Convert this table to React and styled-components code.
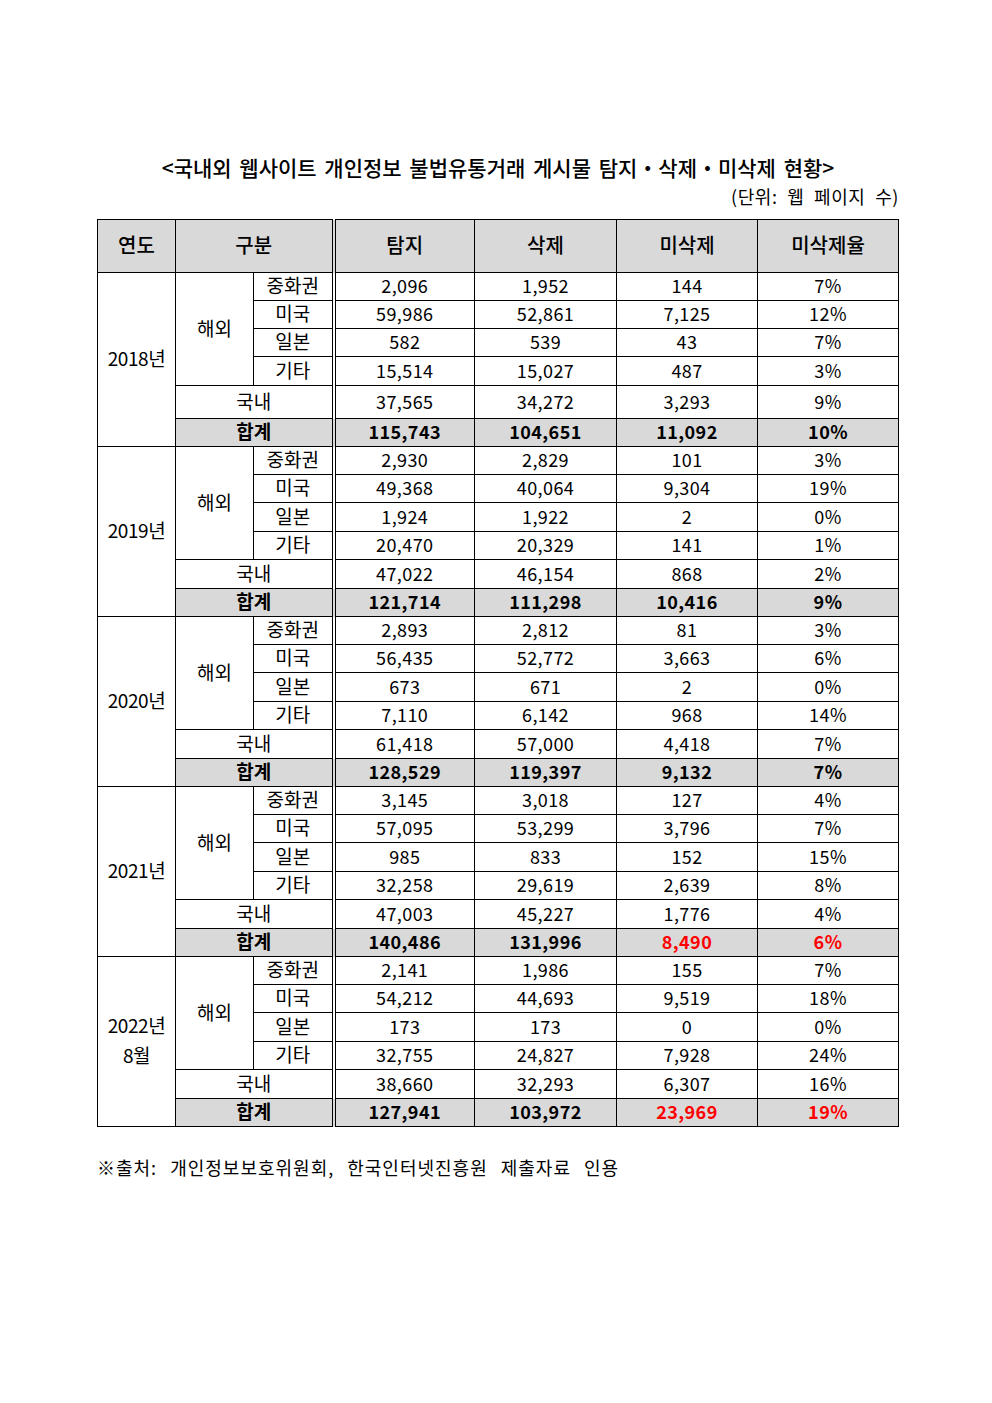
import React from 'react'
import styled, { createGlobalStyle } from 'styled-components'

const GlobalStyle = createGlobalStyle`
  body {
    margin: 0;
    background: #fff;
    color: #000;
    font-family: "Noto Sans CJK KR", "Noto Sans", sans-serif;
  }
`

const Page = styled.div`
  width: 802px;
  margin-left: 97px;
  padding-top: 152px;
  padding-bottom: 220px;
`

const Title = styled.h1`
  margin: 0;
  text-align: center;
  font-size: 21px;
  font-weight: 500;
  line-height: 30px;
  letter-spacing: 0;
  word-spacing: 3px;
`

const Unit = styled.div`
  text-align: right;
  font-size: 18px;
  line-height: 24px;
  margin-top: 2px;
  letter-spacing: 0.6px;
  word-spacing: 5px;
`

const Table = styled.table`
  margin-top: 11px;
  width: 802px;
  table-layout: fixed;
  border-collapse: collapse;
  border: 1px solid #000;
`

const Head = styled.th`
  height: 49px;
  padding: 0 0 3px;
  background: #d9d9d9;
  border: 1px solid #000;
  border-right: ${p => (p.$double ? '4px double #000' : '1px solid #000')};
  font-size: 20px;
  font-weight: 500;
  text-align: center;
`

const Row = styled.tr`
  height: ${p => p.$h}px;
`

const Cell = styled.td`
  padding: 0 0 3px;
  border: 1px solid #000;
  border-right: ${p => (p.$double ? '4px double #000' : '1px solid #000')};
  background: ${p => (p.$gray ? '#d9d9d9' : '#fff')};
  color: ${p => (p.$red ? '#ff0000' : '#000')};
  font-size: ${p => (p.$label ? '19px' : '18px')};
  font-weight: ${p => (p.$bold ? 700 : 400)};
  letter-spacing: ${p => (p.$label ? '0' : '0.4px')};
  line-height: 24px;
  text-align: center;
  vertical-align: middle;
  white-space: nowrap;
`

const YearText = styled.span`
  display: block;
  font-size: 19px;
  line-height: 30px;
  letter-spacing: -0.4px;
`

const Source = styled.p`
  margin: 28px 0 0;
  font-size: 18px;
  line-height: 24px;
  letter-spacing: 1px;
  word-spacing: 8px;
`

const subs = ['중화권', '미국', '일본', '기타']

const years = [
  {
    year: ['2018년'],
    heights: [28, 28, 28, 29, 33, 28],
    rows: [
      ['2,096', '1,952', '144', '7%'],
      ['59,986', '52,861', '7,125', '12%'],
      ['582', '539', '43', '7%'],
      ['15,514', '15,027', '487', '3%'],
      ['37,565', '34,272', '3,293', '9%'],
      ['115,743', '104,651', '11,092', '10%'],
    ],
  },
  {
    year: ['2019년'],
    heights: [28, 28, 29, 28, 29, 28],
    rows: [
      ['2,930', '2,829', '101', '3%'],
      ['49,368', '40,064', '9,304', '19%'],
      ['1,924', '1,922', '2', '0%'],
      ['20,470', '20,329', '141', '1%'],
      ['47,022', '46,154', '868', '2%'],
      ['121,714', '111,298', '10,416', '9%'],
    ],
  },
  {
    year: ['2020년'],
    heights: [28, 28, 29, 28, 29, 28],
    rows: [
      ['2,893', '2,812', '81', '3%'],
      ['56,435', '52,772', '3,663', '6%'],
      ['673', '671', '2', '0%'],
      ['7,110', '6,142', '968', '14%'],
      ['61,418', '57,000', '4,418', '7%'],
      ['128,529', '119,397', '9,132', '7%'],
    ],
  },
  {
    year: ['2021년'],
    heights: [28, 28, 29, 28, 29, 28],
    red: true,
    rows: [
      ['3,145', '3,018', '127', '4%'],
      ['57,095', '53,299', '3,796', '7%'],
      ['985', '833', '152', '15%'],
      ['32,258', '29,619', '2,639', '8%'],
      ['47,003', '45,227', '1,776', '4%'],
      ['140,486', '131,996', '8,490', '6%'],
    ],
  },
  {
    year: ['2022년', '8월'],
    heights: [28, 28, 29, 28, 29, 28],
    red: true,
    rows: [
      ['2,141', '1,986', '155', '7%'],
      ['54,212', '44,693', '9,519', '18%'],
      ['173', '173', '0', '0%'],
      ['32,755', '24,827', '7,928', '24%'],
      ['38,660', '32,293', '6,307', '16%'],
      ['127,941', '103,972', '23,969', '19%'],
    ],
  },
]

const Values = ({ values, total, red }) =>
  values.map((v, i) => (
    <Cell key={i} $bold={total} $gray={total} $red={red && i >= 2}>
      {v}
    </Cell>
  ))

const YearBlock = ({ data }) => {
  const { year, heights, rows, red } = data
  return (
    <>
      {subs.map((s, i) => (
        <Row key={s} $h={heights[i]}>
          {i === 0 && (
            <Cell rowSpan={6} $label>
              {year.map(y => (
                <YearText key={y}>{y}</YearText>
              ))}
            </Cell>
          )}
          {i === 0 && (
            <Cell rowSpan={4} $label>
              해외
            </Cell>
          )}
          <Cell $label $double>
            {s}
          </Cell>
          <Values values={rows[i]} />
        </Row>
      ))}
      <Row $h={heights[4]}>
        <Cell colSpan={2} $label $double>
          국내
        </Cell>
        <Values values={rows[4]} />
      </Row>
      <Row $h={heights[5]}>
        <Cell colSpan={2} $label $double $gray $bold>
          합계
        </Cell>
        <Values values={rows[5]} total red={red} />
      </Row>
    </>
  )
}

const App = () => (
  <Page>
    <GlobalStyle />
    <Title>&lt;국내외 웹사이트 개인정보 불법유통거래 게시물 탐지・삭제・미삭제 현황&gt;</Title>
    <Unit>(단위: 웹 페이지 수)</Unit>
    <Table>
      <colgroup>
        <col style={{ width: 78 }} />
        <col style={{ width: 78 }} />
        <col style={{ width: 80 }} />
        <col style={{ width: 141 }} />
        <col style={{ width: 142 }} />
        <col style={{ width: 141 }} />
        <col style={{ width: 141 }} />
      </colgroup>
      <thead>
        <tr>
          <Head>연도</Head>
          <Head colSpan={2} $double>
            구분
          </Head>
          <Head>탐지</Head>
          <Head>삭제</Head>
          <Head>미삭제</Head>
          <Head>미삭제율</Head>
        </tr>
      </thead>
      <tbody>
        {years.map(y => (
          <YearBlock key={y.year[0]} data={y} />
        ))}
      </tbody>
    </Table>
    <Source>※출처: 개인정보보호위원회, 한국인터넷진흥원 제출자료 인용</Source>
  </Page>
)

export default App
